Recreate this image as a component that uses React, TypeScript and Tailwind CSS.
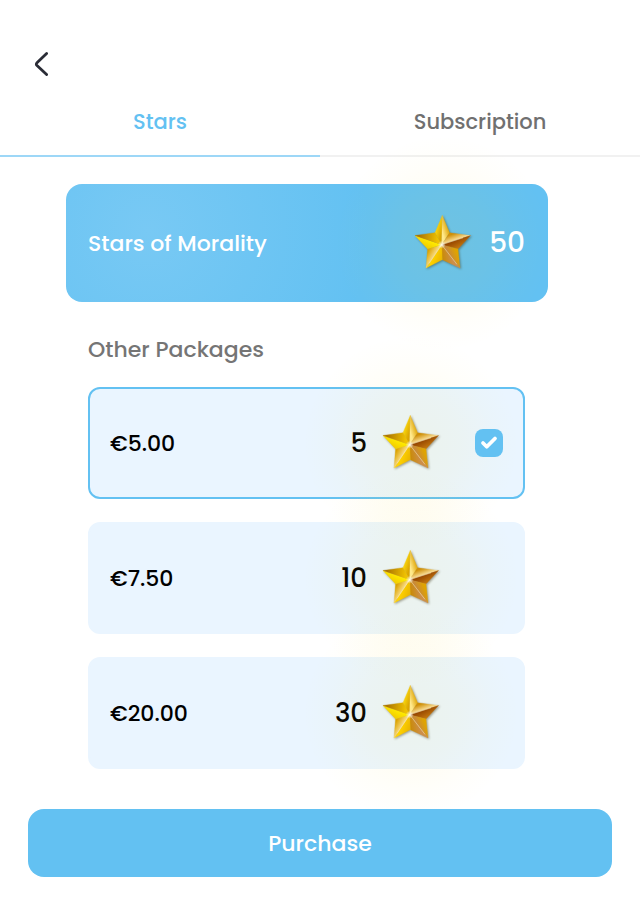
import { useState } from "react";
import { Check } from "lucide-react";
import clsx from "clsx";

type Tab = "stars" | "subscription";

const TABS: { id: Tab; label: string }[] = [
  { id: "stars", label: "Stars" },
  { id: "subscription", label: "Subscription" },
];

const PACKAGES = [
  { id: "small", price: "€5.00", stars: 5 },
  { id: "medium", price: "€7.50", stars: 10 },
  { id: "large", price: "€20.00", stars: 30 },
];

// Each facet is a triangle that meets the others in the middle of the star.
// `line` is the direction of its gradient: x1, y1, x2, y2.
const FACETS = [
  { points: "27.3,0.5 20,17.7 26.7,29.7", from: "#ffdf10", to: "#dba600", line: [20, 14, 27, 16] },
  { points: "27.3,0.5 34.6,17.7 26.7,29.7", from: "#ffe98c", to: "#dea200", line: [27, 16, 34, 14] },
  { points: "34.6,17.7 55.5,20.5 26.7,29.7", from: "#cf9008", to: "#f9dc94", line: [41, 18, 43, 24] },
  { points: "55.5,20.5 43,34 26.7,29.7", from: "#964600", to: "#d08412", line: [40, 25, 45, 35] },
  { points: "43,34 45,53 26.7,29.7", from: "#c98a38", to: "#e0a400", line: [35, 41, 42, 38] },
  { points: "45,53 27.3,44.7 26.7,29.7", from: "#c98a00", to: "#cd8e4a", line: [27, 44, 37, 42] },
  { points: "27.3,44.7 11,53 26.7,29.7", from: "#ffd200", to: "#e9b400", line: [18, 42, 27, 45] },
  { points: "11,53 12.6,34 26.7,29.7", from: "#dca300", to: "#f9dd88", line: [12, 38, 19, 42] },
  { points: "12.6,34 0,20.5 26.7,29.7", from: "#ffea00", to: "#f0c800", line: [14, 25, 10, 33] },
  { points: "0,20.5 20,17.7 26.7,29.7", from: "#a87000", to: "#f0c200", line: [3, 21, 23, 23] },
];

function GoldStar({ id }: { id: string }) {
  return (
    <span className="relative block size-14 shrink-0">
      <span
        aria-hidden
        className="pointer-events-none absolute -inset-20 rounded-full bg-[radial-gradient(closest-side,rgb(255_214_20/0.08),rgb(255_214_20/0.05)_45%,rgb(255_214_20/0.02)_75%,transparent)]"
      />
      <svg
        viewBox="0 0 56 56"
        className="relative size-14 overflow-visible drop-shadow-[1px_1px_1px_rgb(60_50_20/0.45)]"
        aria-hidden
      >
        <defs>
          {FACETS.map((f, i) => (
            <linearGradient
              key={i}
              id={`${id}-${i}`}
              gradientUnits="userSpaceOnUse"
              x1={f.line[0]}
              y1={f.line[1]}
              x2={f.line[2]}
              y2={f.line[3]}
            >
              <stop offset="0" stopColor={f.from} />
              <stop offset="1" stopColor={f.to} />
            </linearGradient>
          ))}
          <radialGradient id={`${id}-shine`}>
            <stop offset="0" stopColor="#fff" stopOpacity="0.9" />
            <stop offset="1" stopColor="#fff" stopOpacity="0" />
          </radialGradient>
        </defs>
        {FACETS.map((f, i) => (
          <polygon
            key={i}
            points={f.points}
            fill={`url(#${id}-${i})`}
            stroke={`url(#${id}-${i})`}
            strokeWidth={0.3}
          />
        ))}
        <path
          d="M26.7 29.7 48 22.8M26.7 29.7 42 49.4M26.7 29.7 14 48.4"
          stroke="#fff3c4"
          strokeWidth={0.8}
          strokeOpacity={0.6}
        />
        <circle cx="26.7" cy="29.7" r="4" fill={`url(#${id}-shine)`} />
      </svg>
    </span>
  );
}

export default function App() {
  const [tab, setTab] = useState<Tab>("stars");
  const [selected, setSelected] = useState("small");

  return (
    <div className="min-h-screen overflow-x-hidden bg-white font-['Poppins','Inter',sans-serif] font-medium text-black">
      <header className="px-5 pt-11 pb-1">
        <button
          type="button"
          aria-label="Back"
          className="flex size-10 items-center justify-center text-[#2a2c36]"
        >
          <svg viewBox="0 0 16 24" className="h-6 w-4" fill="none" aria-hidden>
            <path
              d="M14.6 1.5 5 10.8Q3.6 12.2 5 13.6L14.6 22.6"
              stroke="currentColor"
              strokeWidth={2.8}
              strokeLinecap="round"
              strokeLinejoin="round"
            />
          </svg>
        </button>
      </header>

      <nav role="tablist" className="grid grid-cols-2">
        {TABS.map((t) => (
          <button
            key={t.id}
            type="button"
            role="tab"
            aria-selected={tab === t.id}
            onClick={() => setTab(t.id)}
            className={clsx(
              "h-[69px] border-b-2 text-[21px]",
              tab === t.id
                ? "border-[#9dd7f7] text-[#63c1f2]"
                : "border-[#f1f1f1] text-[#707070]",
            )}
          >
            {t.label}
          </button>
        ))}
      </nav>

      <main className="pt-[27px]">
        <section className="mr-[92px] ml-[66px] flex h-[118px] items-center rounded-2xl bg-[#63c1f2] bg-[radial-gradient(circle_at_17%_40%,#78c9f4,#63c1f2_220px)] pr-[23px] pl-[22px] text-white">
          <h1 className="flex-1 text-[22px]">Stars of Morality</h1>
          <GoldStar id="balance" />
          <span className="relative w-[54px] text-right text-[28px]">50</span>
        </section>

        <fieldset className="mr-[115px] ml-[88px] pt-8">
          <legend className="float-left w-full text-[22px] leading-8 text-[#757575]">
            Other Packages
          </legend>
          <div className="clear-both flex flex-col gap-[23px] pt-[21px]">
            {PACKAGES.map((p) => (
              <label
                key={p.id}
                className={clsx(
                  "flex h-28 cursor-pointer items-center rounded-xl border-2 bg-[#eaf5ff] px-5",
                  selected === p.id ? "border-[#63c1f2]" : "border-[#eaf5ff]",
                )}
              >
                <span className="text-[22px]">{p.price}</span>
                <span className="mr-4 flex-1 text-right text-[26px]">{p.stars}</span>
                <GoldStar id={p.id} />
                <span className="relative ml-9 grid size-7 shrink-0 place-items-center">
                  <input
                    type="radio"
                    name="package"
                    value={p.id}
                    checked={selected === p.id}
                    onChange={() => setSelected(p.id)}
                    className="peer col-start-1 row-start-1 size-7 appearance-none rounded-lg checked:bg-[#63c1f2]"
                  />
                  <Check
                    aria-hidden
                    strokeWidth={5}
                    className="pointer-events-none col-start-1 row-start-1 hidden size-[18px] text-white peer-checked:block"
                  />
                </span>
              </label>
            ))}
          </div>
        </fieldset>
      </main>

      <footer className="px-7 pt-10 pb-10">
        <button
          type="button"
          className="relative h-[68px] w-full rounded-2xl bg-[#63c1f2] text-[22px] text-white"
        >
          Purchase
        </button>
      </footer>
    </div>
  );
}
